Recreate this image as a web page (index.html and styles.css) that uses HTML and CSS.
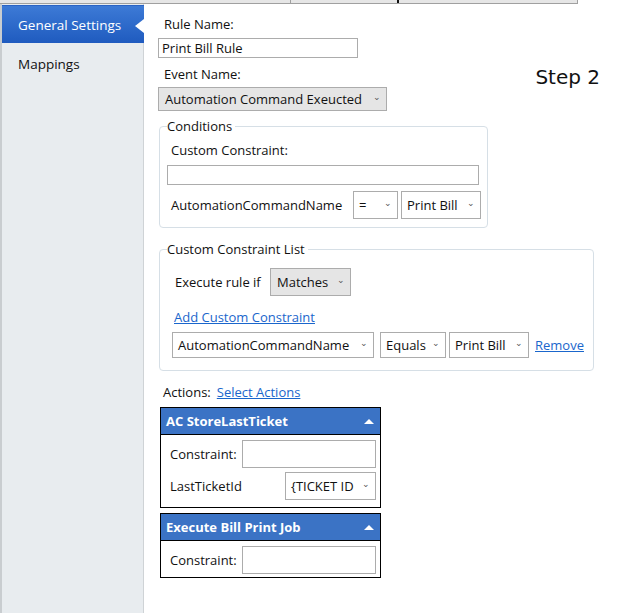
FILE: index.html
```html
<!DOCTYPE html>
<html>
<head>
<meta charset="utf-8">
<link rel="stylesheet" href="styles.css">
</head>
<body>
<div class="topstrip">
  <div class="tab-seg seg1"></div>
  <div class="tab-seg seg2"><span class="tick"></span></div>
</div>
<div class="main">
  <nav class="sidebar">
    <div class="nav-item active">General Settings<span class="notch"></span></div>
    <div class="nav-item">Mappings</div>
  </nav>
  <section class="content">
    <div class="head-row">
      <div class="head-form">
        <div class="label lbl-rule">Rule Name:</div>
        <div class="textbox tb-rule">Print Bill Rule</div>
        <div class="label lbl-event">Event Name:</div>
        <div class="combo combo-gray cb-event"><span>Automation Command Exeucted</span><span class="chev">&#8964;</span></div>
      </div>
      <div class="step">Step 2</div>
    </div>

    <fieldset class="group conditions">
      <legend>Conditions</legend>
      <div class="label lbl-cc">Custom Constraint:</div>
      <div class="textbox tb-cc"></div>
      <div class="row cond-row">
        <span class="row-label">AutomationCommandName</span>
        <div class="combo cb-eq"><span>=</span><span class="chev">&#8964;</span></div>
        <div class="combo cb-pb"><span>Print Bill</span><span class="chev">&#8964;</span></div>
      </div>
    </fieldset>

    <fieldset class="group cclist">
      <legend>Custom Constraint List</legend>
      <div class="row exec-row">
        <span class="row-label">Execute rule if</span>
        <div class="combo combo-gray cb-matches"><span>Matches</span><span class="chev">&#8964;</span></div>
      </div>
      <a class="link add-link">Add Custom Constraint</a>
      <div class="row cc-row">
        <div class="combo cb-acn"><span>AutomationCommandName</span><span class="chev">&#8964;</span></div>
        <div class="combo cb-equals"><span>Equals</span><span class="chev">&#8964;</span></div>
        <div class="combo cb-pb2"><span>Print Bill</span><span class="chev">&#8964;</span></div>
        <a class="link remove-link">Remove</a>
      </div>
    </fieldset>

    <div class="actions-line"><span>Actions:</span><a class="link">Select Actions</a></div>

    <div class="card card1">
      <div class="card-head"><span>AC StoreLastTicket</span><span class="tri"></span></div>
      <div class="card-body">
        <div class="card-row">
          <span class="card-label">Constraint:</span>
          <div class="textbox tb-con"></div>
        </div>
        <div class="card-row">
          <span class="card-label wide">LastTicketId</span>
          <div class="combo cb-ticket"><span>{TICKET ID</span><span class="chev">&#8964;</span></div>
        </div>
      </div>
    </div>

    <div class="card card2">
      <div class="card-head"><span>Execute Bill Print Job</span><span class="tri"></span></div>
      <div class="card-body">
        <div class="card-row">
          <span class="card-label">Constraint:</span>
          <div class="textbox tb-con"></div>
        </div>
      </div>
    </div>
  </section>
</div>
</body>
</html>
```

FILE: styles.css
```css
* { box-sizing: border-box; }
html, body {
  margin: 0;
  padding: 0;
  width: 634px;
  height: 613px;
  overflow: hidden;
  background: #ffffff;
  font-family: "Open Sans", "Noto Sans", sans-serif;
  font-size: 13px;
  color: #111111;
}
.topstrip {
  display: flex;
  height: 4px;
}
.tab-seg {
  height: 4px;
  background: #e6e6e6;
  border-bottom: 1px solid #a0a0a0;
  border-right: 1px solid #a0a0a0;
  position: relative;
}
.seg1 { width: 291px; }
.seg2 { width: 287px; }
.tick {
  position: absolute;
  left: 106px;
  top: 0;
  width: 2px;
  height: 3px;
  background: #111;
}
.main {
  display: flex;
  height: 609px;
}
.sidebar {
  width: 144px;
  flex: none;
  background: #e8ecef;
  border-left: 2px solid #c9cdd0;
  border-right: 1px solid #cfd3d6;
  padding-top: 1px;
}
.nav-item {
  height: 38px;
  display: flex;
  align-items: center;
  padding-left: 16px;
  font-size: 13.5px;
  color: #111;
  position: relative;
}
.nav-item.active {
  background: linear-gradient(#3d7ad6, #1f5bbf);
  color: #ffffff;
  margin-right: -1px;
  border-top: 1px solid #2a63c4;
}
.nav-item + .nav-item { margin-top: 2px; }
.notch {
  position: absolute;
  right: 0;
  top: 13px;
  width: 0;
  height: 0;
  border-top: 7px solid transparent;
  border-bottom: 7px solid transparent;
  border-right: 9px solid #ffffff;
}
.content {
  flex: 1;
  padding-left: 14px;
}
.head-row {
  display: flex;
}
.head-form {
  display: flex;
  flex-direction: column;
  align-items: flex-start;
}
.label {
  padding-left: 6px;
  line-height: 18px;
}
.lbl-rule { margin-top: 11px; }
.textbox {
  border: 1px solid #acacac;
  background: #fff;
  height: 20px;
  line-height: 18px;
  padding-left: 3px;
}
.tb-rule { width: 200px; margin-top: 5px; }
.lbl-event { margin-top: 7px; }
.combo {
  border: 1px solid #acacac;
  background: #ffffff;
  display: flex;
  align-items: center;
  justify-content: space-between;
  padding: 0 5px 0 5px;
}
.combo-gray { background: #e5e5e5; }
.chev {
  font-size: 9px;
  color: #555;
  line-height: 1;
  margin-top: -6px;
  margin-left: 6px;
}
.cb-event { width: 229px; height: 24px; margin-top: 4px; padding-left: 6px; }
.step {
  margin-left: auto;
  margin-right: 34px;
  margin-top: 59px;
  font-family: "DejaVu Sans", "Open Sans", sans-serif;
  font-size: 20px;
  line-height: 28px;
  color: #111;
  height: 28px;
}
.group {
  margin: 0;
  border: 1px solid #d6dfe6;
  border-radius: 4px;
  padding: 0 0 0 7px;
}
.group legend {
  padding: 0 3px 0 0;
  margin-left: 0;
  line-height: 16px;
  font-size: 13px;
}
.conditions {
  width: 329px;
  margin-left: 1px;
  margin-top: 7px;
  height: 110px;
  padding-top: 7px;
}
.lbl-cc { padding-left: 4px; line-height: 18px; }
.tb-cc { width: 312px; margin-top: 6px; }
.row { display: flex; align-items: center; }
.cond-row { margin-top: 6px; }
.row-label { padding-left: 4px; }
.cond-row .row-label { width: 186px; }
.cb-eq { width: 45px; height: 28px; }
.cb-pb { width: 80px; height: 28px; margin-left: 3px; }
.cclist {
  width: 435px;
  margin-left: 1px;
  margin-top: 13px;
  height: 130px;
  padding-top: 11px;
}
.exec-row { padding-left: 4px; }
.exec-row .row-label { width: 99px; }
.cb-matches { width: 81px; height: 28px; padding-left: 6px; }
.link {
  color: #1a66cc;
  text-decoration: underline;
  cursor: pointer;
}
.add-link {
  display: block;
  margin-top: 12px;
  margin-left: 7px;
  line-height: 18px;
}
.cc-row { margin-top: 6px; padding-left: 5px; }
.cb-acn { width: 202px; height: 26px; }
.cb-equals { width: 66px; height: 26px; margin-left: 6px; }
.cb-pb2 { width: 80px; height: 26px; margin-left: 3px; }
.remove-link { margin-left: 6px; }
.actions-line {
  margin-top: 12px;
  padding-left: 5px;
  line-height: 18px;
}
.actions-line .link { margin-left: 6px; }
.card {
  width: 221px;
  margin-left: 2px;
  border: 1px solid #000;
}
.card1 { margin-top: 6px; height: 101px; }
.card2 { margin-top: 5px; height: 65px; }
.card-head {
  background: #3b73c5;
  color: #fff;
  font-weight: bold;
  height: 27px;
  display: flex;
  align-items: center;
  justify-content: space-between;
  padding: 0 5px 0 5px;
  border-bottom: 1px solid #000;
  font-size: 13px;
}
.tri {
  width: 0;
  height: 0;
  border-left: 5px solid transparent;
  border-right: 5px solid transparent;
  border-bottom: 5px solid #fff;
  margin-right: 1px;
}
.card-body { padding: 5px 4px 0 9px; }
.card-row { display: flex; align-items: center; }
.card-row + .card-row { margin-top: 4px; }
.card-label { width: 72px; }
.card-label.wide { width: 115px; }
.tb-con { width: 134px; height: 28px; }
.cb-ticket { width: 91px; height: 28px; padding-left: 5px; }
```
